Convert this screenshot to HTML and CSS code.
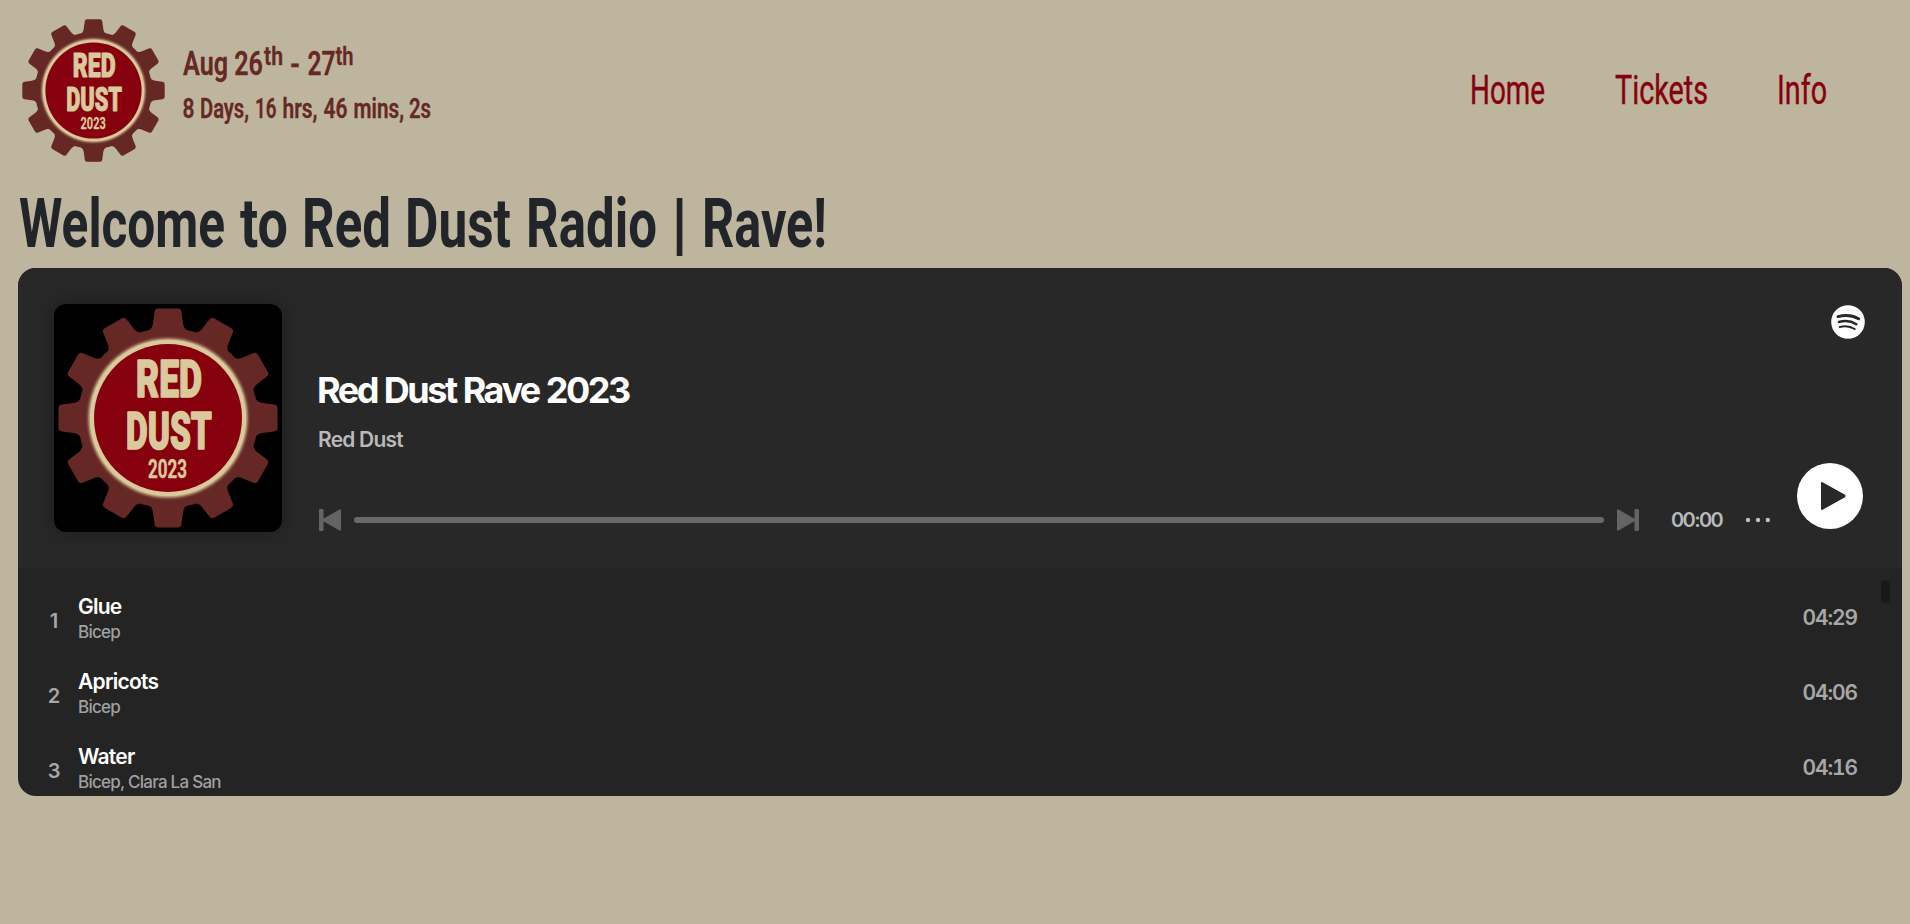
FILE: index.html
```html
<!DOCTYPE html>
<html lang="en">
<head>
<meta charset="utf-8">
<title>Red Dust Radio</title>
<link rel="stylesheet" href="styles.css">
</head>
<body>
<svg class="defs" width="0" height="0" aria-hidden="true">
  <defs>
    <filter id="soft" x="-10%" y="-10%" width="120%" height="120%"><feGaussianBlur stdDeviation="1.6"/></filter>
    <path id="tooth" d="M-21-86Q-15.500-89-15-95L-13.500-106Q-13-109.500-10-109.500H10Q13-109.500 13.500-106L15-95Q15.500-89 21-86Z"/>
    <symbol id="gear" viewBox="-110 -110 220 220">
      <g fill="#652824">
        <circle r="90"/>
        <use href="#tooth"/>
        <use href="#tooth" transform="rotate(30)"/>
        <use href="#tooth" transform="rotate(60)"/>
        <use href="#tooth" transform="rotate(90)"/>
        <use href="#tooth" transform="rotate(120)"/>
        <use href="#tooth" transform="rotate(150)"/>
        <use href="#tooth" transform="rotate(180)"/>
        <use href="#tooth" transform="rotate(210)"/>
        <use href="#tooth" transform="rotate(240)"/>
        <use href="#tooth" transform="rotate(270)"/>
        <use href="#tooth" transform="rotate(300)"/>
        <use href="#tooth" transform="rotate(330)"/>
      </g>
      <circle r="79.500" fill="#d9c99c" filter="url(#soft)"/>
      <circle r="78" fill="#d9c99c"/>
      <circle r="74" fill="#87000d"/>
      <g class="badge-text">
        <text x="-32" y="-21" font-size="51" textLength="66" lengthAdjust="spacingAndGlyphs">RED</text>
        <text x="-42" y="31" font-size="51" textLength="86" lengthAdjust="spacingAndGlyphs">DUST</text>
        <text class="year" x="-20" y="59.500" font-size="25" textLength="39" lengthAdjust="spacingAndGlyphs">2023</text>
      </g>
    </symbol>
  </defs>
</svg>

<header class="topbar">
  <svg class="logo"><use href="#gear"/></svg>
  <svg class="dates" width="260" height="90">
    <text class="date"><tspan x="0" y="30" textLength="80" lengthAdjust="spacingAndGlyphs">Aug 26</tspan><tspan class="sup" x="81" y="19.500" textLength="19" lengthAdjust="spacingAndGlyphs">th</tspan><tspan x="107" y="30" textLength="10" lengthAdjust="spacingAndGlyphs">-</tspan><tspan x="124.500" y="30" textLength="28" lengthAdjust="spacingAndGlyphs">27</tspan><tspan class="sup" x="152.500" y="19.500" textLength="18" lengthAdjust="spacingAndGlyphs">th</tspan></text>
    <text class="count" y="72.500"><tspan x="-.5" textLength="12" lengthAdjust="spacingAndGlyphs">8</tspan><tspan x="17" textLength="49" lengthAdjust="spacingAndGlyphs">Days,</tspan><tspan x="72" textLength="21.500" lengthAdjust="spacingAndGlyphs">16</tspan><tspan x="99.500" textLength="35" lengthAdjust="spacingAndGlyphs">hrs,</tspan><tspan x="140.500" textLength="24" lengthAdjust="spacingAndGlyphs">46</tspan><tspan x="170.500" textLength="50.500" lengthAdjust="spacingAndGlyphs">mins,</tspan><tspan x="226" textLength="22" lengthAdjust="spacingAndGlyphs">2s</tspan></text>
  </svg>
  <nav class="nav">
    <a><svg width="76" height="50"><text x="0" y="38.500" textLength="75" lengthAdjust="spacingAndGlyphs">Home</text></svg></a>
    <a><svg width="94" height="50"><text x="0" y="38.500" textLength="93" lengthAdjust="spacingAndGlyphs">Tickets</text></svg></a>
    <a><svg width="51" height="50"><text x="-1" y="38.500" textLength="50" lengthAdjust="spacingAndGlyphs">Info</text></svg></a>
  </nav>
</header>

<h1 class="title"><svg width="820" height="80"><text y="58"><tspan x="1" textLength="206" lengthAdjust="spacingAndGlyphs">Welcome</tspan><tspan x="222" textLength="48" lengthAdjust="spacingAndGlyphs">to</tspan><tspan x="284" textLength="89" lengthAdjust="spacingAndGlyphs">Red</tspan><tspan x="387" textLength="106" lengthAdjust="spacingAndGlyphs">Dust</tspan><tspan x="508" textLength="131" lengthAdjust="spacingAndGlyphs">Radio</tspan><tspan x="653" textLength="17" lengthAdjust="spacingAndGlyphs">|</tspan><tspan x="684" textLength="125" lengthAdjust="spacingAndGlyphs">Rave!</tspan></text></svg></h1>

<main class="player">
  <section class="now">
    <div class="cover"><svg><use href="#gear"/></svg></div>
    <div class="info">
      <div class="names">
        <h2>Red Dust Rave 2023</h2>
        <p>Red Dust</p>
      </div>
      <div class="controls">
        <svg class="skip" viewBox="0 0 22 22"><rect width="4.500" height="22" rx="1"/><path d="M20.500.4Q22-.2 22 1.200V20.800Q22 22.200 20.500 21.600L4 12V10Z"/></svg>
        <div class="track"></div>
        <svg class="skip" viewBox="0 0 22 22"><rect x="17.500" width="4.500" height="22" rx="1"/><path d="M1.500.4Q0-.2 0 1.200V20.800Q0 22.200 1.500 21.600L18 12V10Z"/></svg>
        <span class="elapsed">00:00</span>
        <svg class="dots" viewBox="0 0 26 6"><circle cx="3" cy="3" r="2.200"/><circle cx="13" cy="3" r="2.200"/><circle cx="22.800" cy="3" r="2.200"/></svg>
      </div>
    </div>
    <div class="side">
      <svg class="spotify" viewBox="0 0 34 34"><circle cx="17" cy="17" r="16.800" fill="#fff"/><g fill="none" stroke="#282828" stroke-linecap="round"><path d="M7 11.600Q18.500 8.700 27.600 13.700" stroke-width="3"/><path d="M7.900 17Q17.500 14.300 25.400 19.200" stroke-width="2.500"/><path d="M8.700 22Q17 19.900 23.700 24" stroke-width="2"/></g></svg>
      <svg class="play" viewBox="0 0 66 66"><circle cx="33" cy="33" r="33" fill="#fff"/><path d="M24 20.200Q24 18.600 25.600 19.300L48 31.800Q49.200 33 48 34.200L25.600 46.700Q24 47.400 24 45.800Z" fill="#282828"/></svg>
    </div>
  </section>
  <section class="list">
    <div class="scroll"></div>
    <ol>
      <li><span class="num">1</span><div class="song"><b>Glue</b><i>Bicep</i></div><span class="time">04:29</span></li>
      <li><span class="num">2</span><div class="song"><b>Apricots</b><i>Bicep</i></div><span class="time">04:06</span></li>
      <li><span class="num">3</span><div class="song"><b>Water</b><i>Bicep, Clara La San</i></div><span class="time">04:16</span></li>
    </ol>
  </section>
</main>
</body>
</html>
```
FILE: styles.css
```css
* { box-sizing: border-box; }
body { margin: 0; background: #bdb59d; font-family: Inter, "Liberation Sans", sans-serif; height: 924px; overflow: hidden; }
h1, h2, p, ol { margin: 0; padding: 0; }
svg { display: block; flex: none; overflow: visible; }
.defs { position: absolute; }
.badge-text { font-family: Roboto, sans-serif; font-weight: 900; fill: #d9c99c; stroke: #d9c99c; stroke-width: 1.6px; stroke-linejoin: bevel; }
.badge-text .year { font-weight: 700; stroke-width: .4px; }

.topbar { display: flex; align-items: center; height: 180px; padding: 0 81px 0 22px; }
.logo { width: 143px; height: 143px; }
.dates { margin-left: 18px; font-family: Roboto, sans-serif; font-weight: 600; fill: #652824; stroke: #652824; stroke-width: .3px; }
.date { font-size: 34px; }
.sup { font-size: 25px; }
.count { font-size: 27px; }
.nav { display: flex; gap: 69px; margin-left: auto; font: 400 40px Roboto, sans-serif; fill: #87000d; stroke: #87000d; stroke-width: .4px; }

.title { height: 88px; padding: 9px 0 0 18px; font: 700 69px Roboto, sans-serif; fill: #212529; }

.player { width: 1884px; height: 528px; margin-left: 18px; border-radius: 18px; overflow: hidden; background: #242424; }
.now { display: flex; height: 300px; padding: 36px; background: #282828; }
.cover { width: 228px; height: 228px; padding: 4px; border-radius: 12px; background: #000; box-shadow: 0 0 22px rgba(0, 0, 0, .3); }
.cover svg { width: 220px; height: 220px; }
.info { display: flex; flex-direction: column; flex: 1; margin-left: 37px; }
.names { height: 204px; padding-top: 64px; }
h2 { margin-left: -2px; color: #fff; font-size: 36px; font-weight: 700; line-height: 44px; letter-spacing: -2.5px; word-spacing: 1px; white-space: nowrap; }
.names p { margin: 15px 0 0 -1px; color: #b9b9b9; font-size: 21px; font-weight: 600; line-height: 26px; letter-spacing: -.8px; }
.controls { display: flex; align-items: center; height: 24px; }
.skip { width: 22px; height: 22px; fill: #646464; }
.track { width: 1250px; height: 6px; margin: 0 13px; border-radius: 3px; background: #696969; }
.elapsed { width: 52px; margin-left: 32px; color: #b9b9b9; font-size: 20px; font-weight: 600; letter-spacing: -1.6px; white-space: nowrap; }
.dots { width: 26px; height: 6px; margin-left: 22px; fill: #c0c0c0; }
.side { display: flex; flex-direction: column; justify-content: space-between; align-items: flex-end; width: 68px; height: 225px; }
.spotify { width: 34px; height: 34px; margin-top: 1px; margin-right: 1px; }
.play { width: 66px; height: 66px; margin-right: 3px; }

.list { position: relative; height: 228px; }
.list ol { padding-top: 17px; list-style: none; }
.list li { display: flex; height: 75px; padding: 0 45px 0 24px; }
.num { width: 24px; margin-top: 23px; color: #a7a7a7; font-size: 20px; font-weight: 600; line-height: 26px; text-align: center; }
.song { margin-left: 12px; flex: 1; }
.song b { display: block; margin-top: 9px; color: #fff; font-size: 21px; font-weight: 600; line-height: 26px; letter-spacing: -.75px; }
.song i { display: block; color: #a0a0a0; font-size: 17px; font-style: normal; font-weight: 500; line-height: 24px; letter-spacing: -.75px; }
.time { margin-top: 20px; color: #a7a7a7; font-size: 21px; font-weight: 600; line-height: 26px; letter-spacing: -1.1px; font-variant-numeric: tabular-nums; }
.scroll { position: absolute; right: 12px; top: 12px; width: 9px; height: 23px; border-radius: 4.5px; background: #191919; }
```
